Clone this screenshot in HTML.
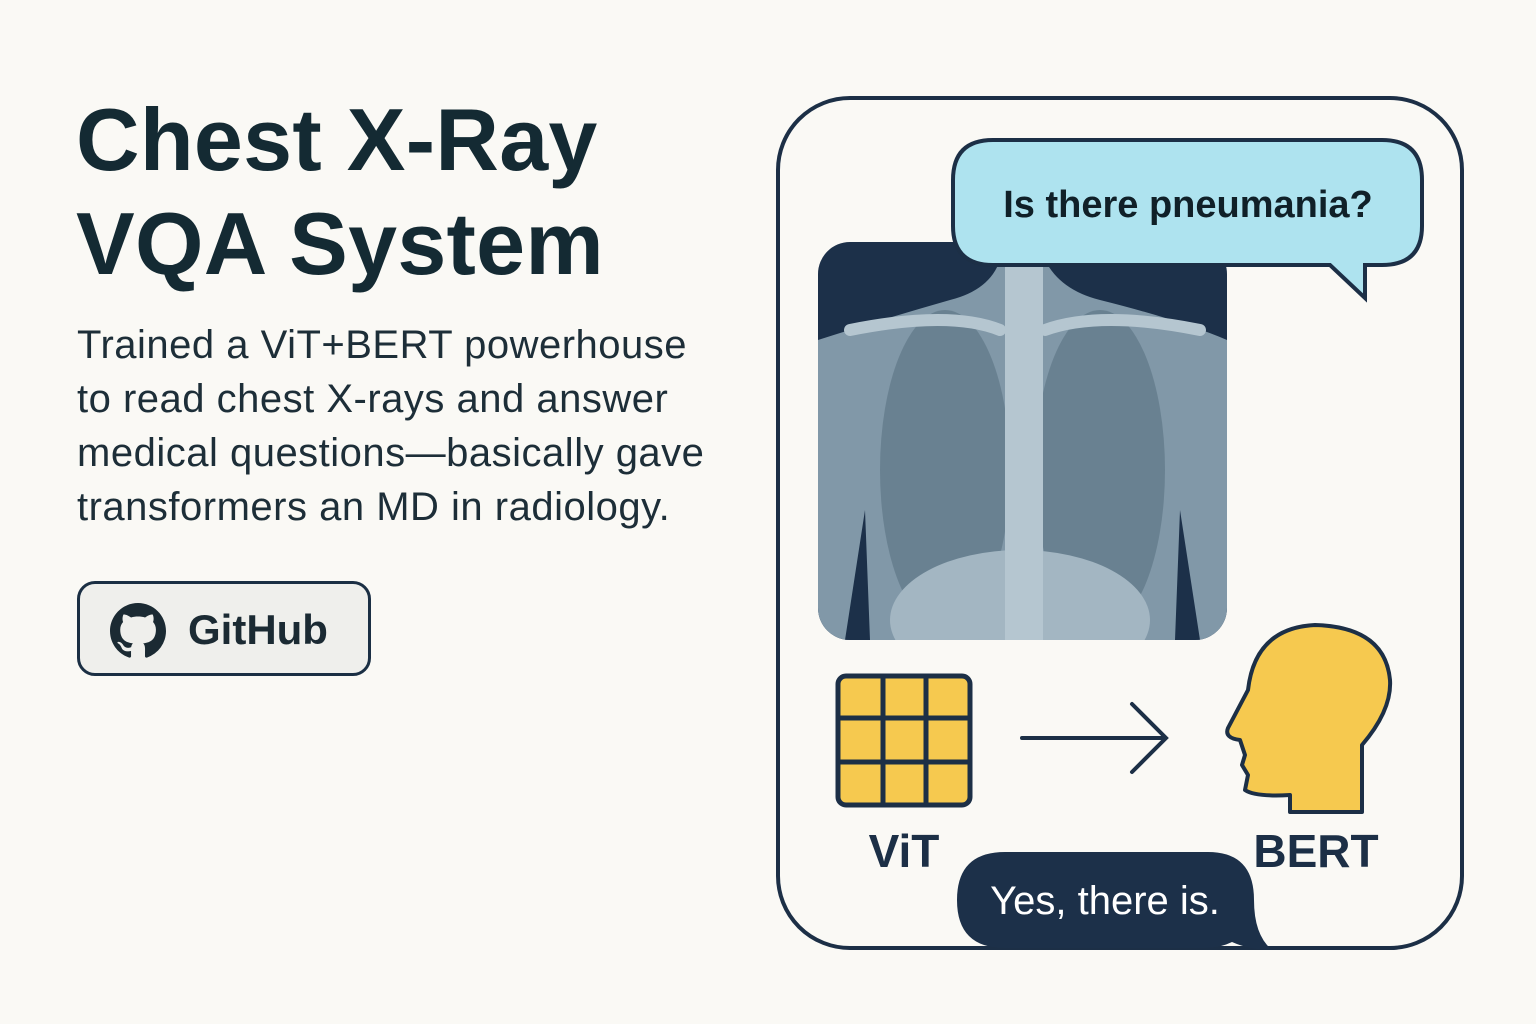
<!DOCTYPE html>
<html><head><meta charset="utf-8"><style>
html,body{margin:0;padding:0;background:#faf9f5;width:1536px;height:1024px;overflow:hidden;font-family:"Liberation Sans",sans-serif;color:#142a33}
.t{position:absolute;left:76px;top:88px;font-size:88px;font-weight:bold;line-height:104px;letter-spacing:0.3px}
.p{position:absolute;left:77px;top:318px;font-size:40px;line-height:54px;color:#1d2e38;letter-spacing:0.5px}
.gh{position:absolute;left:77px;top:581px;width:294px;height:95px;border:3px solid #1b2f44;border-radius:18px;background:#efefec;box-sizing:border-box}
.gh span{position:absolute;left:108px;top:22px;font-size:42px;font-weight:bold;color:#1b2a33}
</style></head><body>
<div class="t">Chest X-Ray<br>VQA System</div>
<div class="p">Trained a ViT+BERT powerhouse<br>to read chest X-rays and answer<br>medical questions—basically gave<br>transformers an MD in radiology.</div>
<div class="gh">
<svg style="position:absolute;left:30px;top:19px" width="56" height="56" viewBox="0 0 16 16"><path fill="#1b2a33" d="M8 0C3.58 0 0 3.58 0 8c0 3.54 2.290 6.530 5.470 7.590.4.07.55-.17.55-.38 0-.19-.01-.82-.01-1.49-2.01.37-2.530-.49-2.690-.94-.09-.23-.48-.94-.82-1.13-.28-.15-.68-.52-.01-.53.63-.01 1.080.58 1.230.82.72 1.210 1.870.87 2.330.66.07-.52.28-.87.51-1.07-1.78-.2-3.64-.89-3.64-3.95 0-.87.31-1.59.82-2.15-.08-.2-.36-1.02.08-2.12 0 0 .67-.21 2.200.82.64-.18 1.320-.27 2-.27.68 0 1.360.09 2 .27 1.530-1.04 2.200-.82 2.200-.82.44 1.100.16 1.920.08 2.120.51.56.82 1.270.82 2.150 0 3.070-1.870 3.750-3.650 3.950.29.25.54.73.54 1.480 0 1.070-.01 1.930-.01 2.200 0 .21.15.46.55.38A8.013 8.013 0 0016 8c0-4.42-3.58-8-8-8z"/></svg>
<span>GitHub</span></div>
<svg style="position:absolute;left:0;top:0" width="1536" height="1024">
<rect x="778" y="98" width="684" height="850" rx="72" fill="#faf9f5" stroke="#1c2f46" stroke-width="4"/>
<defs><clipPath id="c"><rect x="818" y="242" width="409" height="398" rx="32"/></clipPath></defs>
<g clip-path="url(#c)">
<rect x="818" y="242" width="409" height="398" fill="#1c3049"/>
<path d="M818 340 Q880 320 950 300 Q990 290 1000 260 L1045 260 Q1060 290 1100 300 Q1180 320 1227 340 L1227 640 L818 640Z" fill="#8198a8"/>
<path d="M845 640 L865 510 L870 640Z M1200 640 L1180 510 L1175 640Z" fill="#1c3049"/>
<ellipse cx="945" cy="470" rx="65" ry="160" fill="#5f7888" opacity=".7"/>
<ellipse cx="1100" cy="470" rx="65" ry="160" fill="#5f7888" opacity=".7"/>
<ellipse cx="1020" cy="620" rx="130" ry="70" fill="#a3b6c2"/>
<rect x="1005" y="260" width="38" height="380" fill="#b5c6d0"/>
<path d="M850 330 Q950 310 1000 330 M1045 330 Q1100 310 1200 330" stroke="#b5c6d0" stroke-width="12" fill="none" stroke-linecap="round"/>
</g>
<path d="M993 140 H1382 Q1422 140 1422 180 V226 Q1422 265 1382 265 H1365 V298 L1330 265 H993 Q953 265 953 226 V180 Q953 140 993 140Z" fill="#aee3ef" stroke="#1c2f46" stroke-width="4"/>
<text x="1188" y="217" font-size="38" font-weight="bold" text-anchor="middle" fill="#102028" font-family="Liberation Sans">Is there pneumania?</text>
<rect x="838" y="676" width="132" height="129" rx="8" fill="#f6c94f" stroke="#1c2f46" stroke-width="5"/>
<path d="M883 676V805M926 676V805M838 718H970M838 762H970" stroke="#1c2f46" stroke-width="5"/>
<path d="M1022 738H1165M1132 704L1166 738L1132 772" stroke="#1c2f46" stroke-width="4" fill="none" stroke-linecap="round"/>
<path d="M1362 812 V745 Q1392 710 1390 680 Q1385 627 1315 625 Q1255 628 1248 690 L1228 728 Q1224 738 1240 740 L1245 755 L1242 765 L1248 775 L1245 790 Q1255 797 1290 795 V812Z" fill="#f6c94f" stroke="#1c2f46" stroke-width="4" stroke-linejoin="round"/>
<text x="904" y="867" font-size="46" font-weight="bold" text-anchor="middle" fill="#1c2f46" font-family="Liberation Sans">ViT</text>
<text x="1316" y="867" font-size="46" font-weight="bold" text-anchor="middle" fill="#1c2f46" font-family="Liberation Sans">BERT</text>
<path d="M1005 852 H1208 Q1254 852 1254 900 Q1254 935 1272 950 Q1250 950 1232 942 Q1220 948 1205 948 H1005 Q957 948 957 900 Q957 852 1005 852Z" fill="#1c3049"/>
<text x="1105" y="914" font-size="40" text-anchor="middle" fill="#ffffff" font-family="Liberation Sans">Yes, there is.</text>
</svg>
</body></html>
